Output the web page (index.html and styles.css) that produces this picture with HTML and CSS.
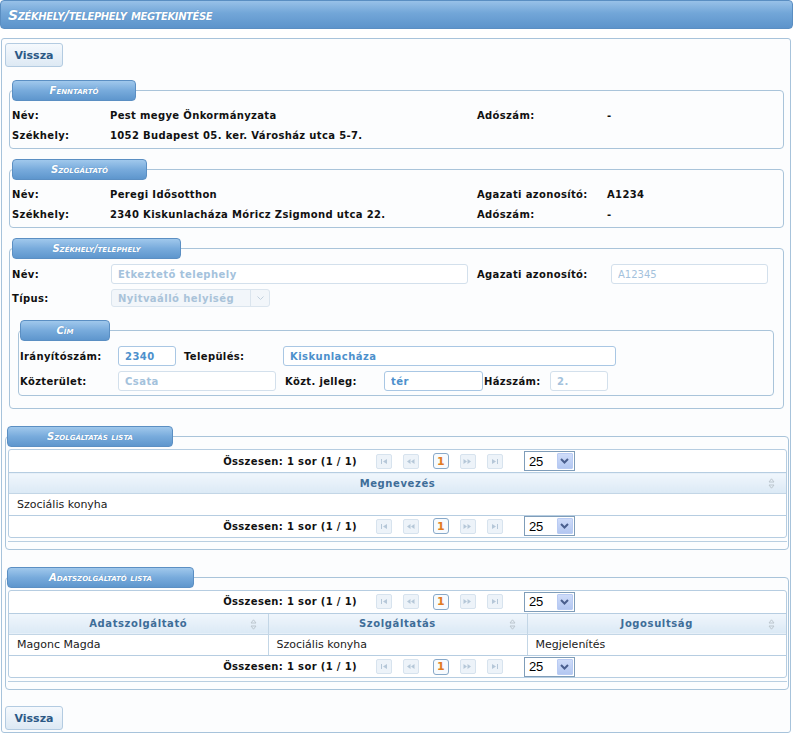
FILE: index.html
```html
<!DOCTYPE html>
<html lang="hu">
<head>
<meta charset="utf-8">
<title>Székhely/telephely megtekintése</title>
<link rel="stylesheet" href="styles.css">
</head>
<body>
<div class="page-header"><h1 class="page-title">Székhely/telephely megtekintése</h1></div>
<div class="panel">
  <div class="btn-row"><button class="btn" type="button">Vissza</button></div>

  <fieldset class="group group-inner">
    <legend class="legend w-fenntarto"><span class="legend-text">Fenntartó</span></legend>
    <div class="info-grid">
      <span>Név:</span><span>Pest megye Önkormányzata</span><span>Adószám:</span><span>-</span>
      <span>Székhely:</span><span>1052 Budapest 05. ker. Városház utca 5-7.</span><span></span><span></span>
    </div>
  </fieldset>

  <fieldset class="group group-inner group-second">
    <legend class="legend w-szolg"><span class="legend-text">Szolgáltató</span></legend>
    <div class="info-grid">
      <span>Név:</span><span>Peregi Idősotthon</span><span>Agazati azonosító:</span><span>A1234</span>
      <span>Székhely:</span><span>2340 Kiskunlacháza Móricz Zsigmond utca 22.</span><span>Adószám:</span><span>-</span>
    </div>
  </fieldset>

  <fieldset class="group group-inner group-second group-site">
    <legend class="legend w-szekhely"><span class="legend-text">Székhely/telephely</span></legend>
    <div class="form-grid">
      <span class="lbl">Név:</span>
      <span><input class="field field-muted w-name" type="text" value="Etkeztető telephely" readonly></span>
      <span class="lbl">Agazati azonosító:</span>
      <span><input class="field field-muted field-thin w-agazati" type="text" value="A12345" readonly></span>
      <span class="lbl">Típus:</span>
      <span class="combo">
        <span class="combo-text">Nyitvaálló helyiség</span>
        <span class="combo-btn"><svg width="7" height="4" viewBox="0 0 7 4"><path d="M0.5 0.5 L3.5 3.5 L6.5 0.5" fill="none" stroke="#c2d1de" stroke-width="1"/></svg></span>
      </span>
      <span></span><span></span>
    </div>

    <fieldset class="group group-address">
      <legend class="legend w-cim"><span class="legend-text">Cím</span></legend>
      <div class="addr-row">
        <span class="lbl w-l1">Irányítószám:</span>
        <input class="field field-active w-zip" type="text" value="2340" readonly>
        <span class="lbl w-l2 gap-8">Település:</span>
        <input class="field field-active w-city" type="text" value="Kiskunlacháza" readonly>
      </div>
      <div class="addr-row">
        <span class="lbl w-l1">Közterület:</span>
        <input class="field field-muted w-street" type="text" value="Csata" readonly>
        <span class="lbl w-l2 gap-9">Közt. jelleg:</span>
        <input class="field field-active w-type" type="text" value="tér" readonly>
        <span class="lbl w-l3">Házszám:</span>
        <input class="field field-muted w-house" type="text" value="2." readonly>
      </div>
    </fieldset>
  </fieldset>

  <fieldset class="group group-list">
    <legend class="legend legend-list w-lista1"><span class="legend-text">Szolgáltatás lista</span></legend>
    <div class="list-wrap">
      <div class="dt">
        <div class="pager">
          <span class="pager-total">Összesen: 1 sor (1 / 1)</span>
          <span class="pg-btn"><svg width="8" height="7" viewBox="0 0 8 7"><path d="M1.5 1 V6" stroke="#b5c7d8" stroke-width="1"/><path d="M7 1 L3 3.5 L7 6 Z" fill="#b5c7d8"/></svg></span>
          <span class="pg-btn"><svg width="9" height="7" viewBox="0 0 9 7"><path d="M4.5 1 L1 3.5 L4.5 6 Z M8.5 1 L5 3.5 L8.5 6 Z" fill="#b5c7d8"/></svg></span>
          <span class="pg-num">1</span>
          <span class="pg-btn"><svg width="9" height="7" viewBox="0 0 9 7"><path d="M0.5 1 L4 3.5 L0.5 6 Z M4.5 1 L8 3.5 L4.5 6 Z" fill="#b5c7d8"/></svg></span>
          <span class="pg-btn pg-last"><svg width="8" height="7" viewBox="0 0 8 7"><path d="M1 1 L5 3.5 L1 6 Z" fill="#b5c7d8"/><path d="M6.5 1 V6" stroke="#b5c7d8" stroke-width="1"/></svg></span>
          <span class="rows-select"><span class="rows-val">25</span><span class="rows-arrow"><svg width="9" height="6" viewBox="0 0 9 6"><path d="M1 1 L4.5 4.5 L8 1" fill="none" stroke="#4a5f8e" stroke-width="2"/></svg></span></span>
        </div>
        <table class="grid">
          <thead>
            <tr><th><span class="th-text">Megnevezés</span><span class="sort"><svg width="7" height="11" viewBox="0 0 7 11"><path d="M3.5 0.8 L6 4 L1 4 Z M3.5 10.2 L6 7 L1 7 Z" fill="none" stroke="#bcc6ce" stroke-width="1"/></svg></span></th></tr>
          </thead>
          <tbody>
            <tr><td>Szociális konyha</td></tr>
          </tbody>
        </table>
        <div class="pager pager-bottom">
          <span class="pager-total">Összesen: 1 sor (1 / 1)</span>
          <span class="pg-btn"><svg width="8" height="7" viewBox="0 0 8 7"><path d="M1.5 1 V6" stroke="#b5c7d8" stroke-width="1"/><path d="M7 1 L3 3.5 L7 6 Z" fill="#b5c7d8"/></svg></span>
          <span class="pg-btn"><svg width="9" height="7" viewBox="0 0 9 7"><path d="M4.5 1 L1 3.5 L4.5 6 Z M8.5 1 L5 3.5 L8.5 6 Z" fill="#b5c7d8"/></svg></span>
          <span class="pg-num">1</span>
          <span class="pg-btn"><svg width="9" height="7" viewBox="0 0 9 7"><path d="M0.5 1 L4 3.5 L0.5 6 Z M4.5 1 L8 3.5 L4.5 6 Z" fill="#b5c7d8"/></svg></span>
          <span class="pg-btn pg-last"><svg width="8" height="7" viewBox="0 0 8 7"><path d="M1 1 L5 3.5 L1 6 Z" fill="#b5c7d8"/><path d="M6.5 1 V6" stroke="#b5c7d8" stroke-width="1"/></svg></span>
          <span class="rows-select"><span class="rows-val">25</span><span class="rows-arrow"><svg width="9" height="6" viewBox="0 0 9 6"><path d="M1 1 L4.5 4.5 L8 1" fill="none" stroke="#4a5f8e" stroke-width="2"/></svg></span></span>
        </div>
      </div>
    </div>
  </fieldset>

  <fieldset class="group group-list">
    <legend class="legend legend-list w-lista2"><span class="legend-text">Adatszolgáltató lista</span></legend>
    <div class="list-wrap">
      <div class="dt">
        <div class="pager">
          <span class="pager-total">Összesen: 1 sor (1 / 1)</span>
          <span class="pg-btn"><svg width="8" height="7" viewBox="0 0 8 7"><path d="M1.5 1 V6" stroke="#b5c7d8" stroke-width="1"/><path d="M7 1 L3 3.5 L7 6 Z" fill="#b5c7d8"/></svg></span>
          <span class="pg-btn"><svg width="9" height="7" viewBox="0 0 9 7"><path d="M4.5 1 L1 3.5 L4.5 6 Z M8.5 1 L5 3.5 L8.5 6 Z" fill="#b5c7d8"/></svg></span>
          <span class="pg-num">1</span>
          <span class="pg-btn"><svg width="9" height="7" viewBox="0 0 9 7"><path d="M0.5 1 L4 3.5 L0.5 6 Z M4.5 1 L8 3.5 L4.5 6 Z" fill="#b5c7d8"/></svg></span>
          <span class="pg-btn pg-last"><svg width="8" height="7" viewBox="0 0 8 7"><path d="M1 1 L5 3.5 L1 6 Z" fill="#b5c7d8"/><path d="M6.5 1 V6" stroke="#b5c7d8" stroke-width="1"/></svg></span>
          <span class="rows-select"><span class="rows-val">25</span><span class="rows-arrow"><svg width="9" height="6" viewBox="0 0 9 6"><path d="M1 1 L4.5 4.5 L8 1" fill="none" stroke="#4a5f8e" stroke-width="2"/></svg></span></span>
        </div>
        <table class="grid grid-3">
          <thead>
            <tr>
              <th><span class="th-text">Adatszolgáltató</span><span class="sort"><svg width="7" height="11" viewBox="0 0 7 11"><path d="M3.5 0.8 L6 4 L1 4 Z M3.5 10.2 L6 7 L1 7 Z" fill="none" stroke="#bcc6ce" stroke-width="1"/></svg></span></th>
              <th><span class="th-text">Szolgáltatás</span><span class="sort"><svg width="7" height="11" viewBox="0 0 7 11"><path d="M3.5 0.8 L6 4 L1 4 Z M3.5 10.2 L6 7 L1 7 Z" fill="none" stroke="#bcc6ce" stroke-width="1"/></svg></span></th>
              <th><span class="th-text">Jogosultság</span><span class="sort"><svg width="7" height="11" viewBox="0 0 7 11"><path d="M3.5 0.8 L6 4 L1 4 Z M3.5 10.2 L6 7 L1 7 Z" fill="none" stroke="#bcc6ce" stroke-width="1"/></svg></span></th>
            </tr>
          </thead>
          <tbody>
            <tr><td>Magonc Magda</td><td>Szociális konyha</td><td>Megjelenítés</td></tr>
          </tbody>
        </table>
        <div class="pager pager-bottom">
          <span class="pager-total">Összesen: 1 sor (1 / 1)</span>
          <span class="pg-btn"><svg width="8" height="7" viewBox="0 0 8 7"><path d="M1.5 1 V6" stroke="#b5c7d8" stroke-width="1"/><path d="M7 1 L3 3.5 L7 6 Z" fill="#b5c7d8"/></svg></span>
          <span class="pg-btn"><svg width="9" height="7" viewBox="0 0 9 7"><path d="M4.5 1 L1 3.5 L4.5 6 Z M8.5 1 L5 3.5 L8.5 6 Z" fill="#b5c7d8"/></svg></span>
          <span class="pg-num">1</span>
          <span class="pg-btn"><svg width="9" height="7" viewBox="0 0 9 7"><path d="M0.5 1 L4 3.5 L0.5 6 Z M4.5 1 L8 3.5 L4.5 6 Z" fill="#b5c7d8"/></svg></span>
          <span class="pg-btn pg-last"><svg width="8" height="7" viewBox="0 0 8 7"><path d="M1 1 L5 3.5 L1 6 Z" fill="#b5c7d8"/><path d="M6.5 1 V6" stroke="#b5c7d8" stroke-width="1"/></svg></span>
          <span class="rows-select"><span class="rows-val">25</span><span class="rows-arrow"><svg width="9" height="6" viewBox="0 0 9 6"><path d="M1 1 L4.5 4.5 L8 1" fill="none" stroke="#4a5f8e" stroke-width="2"/></svg></span></span>
        </div>
      </div>
    </div>
  </fieldset>

  <div class="btn-row btn-row-bottom"><button class="btn" type="button">Vissza</button></div>
</div>
</body>
</html>
```

FILE: styles.css
```css
* { box-sizing: border-box; }

body {
  margin: 0;
  background: #ffffff;
  font-family: "DejaVu Sans", Verdana, sans-serif;
  font-size: 10px;
  color: #111;
}

.page-header {
  height: 29px;
  margin: 0 0 9px 0;
  border: 1px solid #5a8ec2;
  border-radius: 4px;
  background: linear-gradient(#98c1e8 0%, #72a6d8 45%, #5d94cb 100%);
  display: flex;
  align-items: center;
  padding-left: 7px;
}

.page-title {
  margin: 0;
  font-size: 14px;
  font-style: italic;
  font-variant: small-caps;
  font-weight: bold;
  letter-spacing: -0.4px;
  color: #ffffff;
  text-shadow: 0 0 1px #4a7fb4;
}

.panel {
  margin: 0 2px 0 1px;
  border: 1px solid #a7c3db;
  border-radius: 3px;
  padding: 4px 0 2px 3px;
  background: #fcfdfe;
}

.btn-row { display: flex; }
.btn-row-bottom { margin-top: 16px; }

.btn {
  width: 58px;
  height: 24px;
  border: 1px solid #b3cbe1;
  border-radius: 3px;
  background: linear-gradient(#f5f9fd, #dde9f4);
  color: #2b5885;
  font-family: "DejaVu Sans", Verdana, sans-serif;
  font-size: 11px;
  font-weight: bold;
  padding: 0;
}

.group {
  border: 1px solid #a9c4da;
  border-radius: 4px;
  padding: 4px 2px 3px 2px;
  margin: 0;
  min-width: 0;
}

.group-inner {
  margin: 13px 6px 0 4px;
}
.group-second { margin-top: 10px; }
.group-site { padding-top: 3px; padding-bottom: 12px; }

.group-address {
  margin: 10px 7px 0 6px;
  padding: 5px 2px 4px 1px;
}

.group-list {
  margin: 17px 1px 0 0;
  padding: 2px 1px 7px 2px;
}

.legend {
  height: 21px;
  padding: 0;
  border: 1px solid #5b8fc3;
  border-radius: 4px;
  background: linear-gradient(#a0c8ec 0%, #78abdc 50%, #5e96cd 100%);
  text-align: left;
}
.legend-text {
  display: block;
  line-height: 19px;
  text-align: center;
  color: #ffffff;
  font-size: 10px;
  font-style: italic;
  font-weight: bold;
  font-variant: small-caps;
  text-shadow: 0 0 1px #4f84b8;
}
.legend-list { margin-left: -1px; }

.w-fenntarto { width: 124px; }
.w-szolg { width: 135px; }
.w-szekhely { width: 169px; }
.w-cim { width: 90px; }
.w-lista1 { width: 166px; }
.w-lista2 { width: 187px; }

.info-grid {
  display: grid;
  grid-template-columns: 98px 367px 130px 1fr;
  grid-auto-rows: 20px;
  align-items: center;
  font-weight: bold;
  letter-spacing: 0.35px;
}

.form-grid {
  display: grid;
  grid-template-columns: 99px 366px 134px 1fr;
  grid-auto-rows: 24px;
  align-items: center;
  font-weight: bold;
  letter-spacing: 0.35px;
}
.form-grid > span { display: flex; align-items: center; }

.lbl { font-weight: bold; white-space: nowrap; letter-spacing: 0.35px; }

.field {
  height: 20px;
  border: 1px solid #d3e0ec;
  border-radius: 3px;
  background: #ffffff;
  padding: 0 0 0 6px;
  font-family: "DejaVu Sans", Verdana, sans-serif;
  font-size: 10px;
  font-weight: bold;
  letter-spacing: 0.45px;
  outline: none;
}
.field-muted { color: #a4c2dc; }
.field-thin { font-weight: normal; letter-spacing: 0; }
.field-active { color: #4d90cc; border-color: #a9c7e4; }

.w-name { width: 357px; }
.w-agazati { width: 157px; }
.w-zip { width: 58px; }
.w-city { width: 333px; }
.w-street { width: 158px; }
.w-type { width: 99px; }
.w-house { width: 58px; }

.combo {
  width: 159px;
  height: 18px;
  border: 1px solid #dbe5ee;
  border-radius: 3px;
  background: #f2f6fa;
  display: flex;
  align-items: center;
}
.combo-text {
  flex: 1;
  padding-left: 6px;
  color: #a9c3d9;
  font-weight: bold;
  letter-spacing: 0.45px;
}
.combo-btn {
  width: 19px;
  height: 16px;
  border-left: 1px solid #dbe5ee;
  display: flex;
  align-items: center;
  justify-content: center;
}

.addr-row {
  display: flex;
  align-items: center;
  height: 20px;
}
.addr-row + .addr-row { margin-top: 5px; }
.w-l1 { width: 98px; }
.w-l2 { width: 99px; }
.w-l3 { width: 66px; margin-left: 1px; }
.gap-8 { margin-left: 8px; }
.gap-9 { margin-left: 9px; }

.list-wrap {
  border-bottom: 1px solid #b9cfe1;
  padding-bottom: 3px;
}

.dt {
  border: 1px solid #b6cde1;
  border-radius: 3px;
  background: #ffffff;
}

.pager {
  height: 22px;
  display: flex;
  align-items: center;
  justify-content: center;
  padding-left: 3px;
}
.pager-bottom { border-top: 1px solid #b6cde1; }

.pager-total { font-weight: bold; letter-spacing: 0.35px; margin-right: 19px; }

.pg-btn {
  width: 16px;
  height: 15px;
  border: 1px solid #d7e3ee;
  border-radius: 2px;
  background: #edf3f9;
  display: flex;
  align-items: center;
  justify-content: center;
  margin-right: 11px;
}
.pg-num {
  width: 16px;
  height: 16px;
  border: 1px solid #88a9c9;
  border-radius: 3px;
  background: #f8fbfe;
  color: #e27b22;
  font-size: 11px;
  font-weight: bold;
  display: flex;
  align-items: center;
  justify-content: center;
  margin: 0 11px 0 3px;
}
.pg-last { margin-right: 21px; }

.rows-select {
  width: 51px;
  height: 20px;
  border: 1px solid #7f9db9;
  background: #ffffff;
  display: flex;
  align-items: center;
  justify-content: space-between;
  padding: 1px;
}
.rows-val {
  font-family: "Liberation Sans", Arial, sans-serif;
  font-size: 13px;
  color: #000;
  padding-left: 3px;
}
.rows-arrow {
  width: 16px;
  height: 16px;
  border: 1px solid #b9cbf3;
  border-radius: 1px;
  background: linear-gradient(#cfdcf9, #b3c7f1);
  display: flex;
  align-items: center;
  justify-content: center;
}

.grid {
  width: 100%;
  border-collapse: collapse;
  table-layout: fixed;
}
.grid th {
  height: 21px;
  padding: 0 8px;
  border-top: 1px solid #b6cde1;
  border-bottom: 1px solid #c3d6e6;
  background: linear-gradient(#f0f6fc, #dbe9f5);
  color: #3e6d98;
  font-size: 10px;
  font-weight: bold;
  letter-spacing: 0.6px;
  text-align: center;
  position: relative;
}
.grid-3 th + th, .grid-3 td + td { border-left: 1px solid #c3d6e6; }
.sort {
  position: absolute;
  right: 11px;
  top: 5px;
  display: flex;
}
.grid td {
  height: 21px;
  padding: 0 8px;
  font-size: 11px;
  font-weight: normal;
  color: #1a1a1a;
}
```
